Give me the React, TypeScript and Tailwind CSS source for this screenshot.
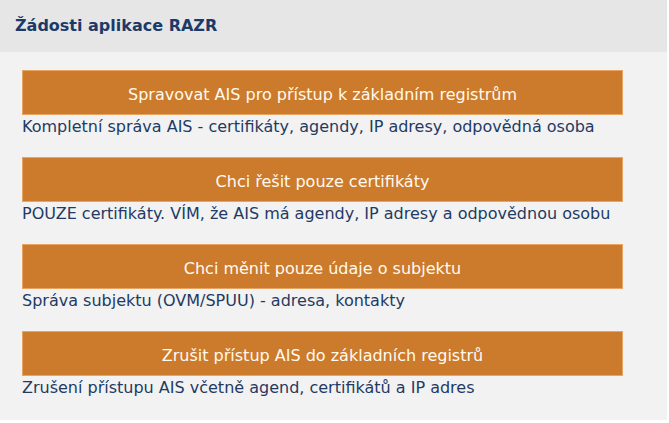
const items = [
  {
    title: "Spravovat AIS pro přístup k základním registrům",
    desc: "Kompletní správa AIS - certifikáty, agendy, IP adresy, odpovědná osoba",
  },
  {
    title: "Chci řešit pouze certifikáty",
    desc: "POUZE certifikáty. VÍM, že AIS má agendy, IP adresy a odpovědnou osobu",
  },
  {
    title: "Chci měnit pouze údaje o subjektu",
    desc: "Správa subjektu (OVM/SPUU) - adresa, kontakty",
  },
  {
    title: "Zrušit přístup AIS do základních registrů",
    desc: "Zrušení přístupu AIS včetně agend, certifikátů a IP adres",
  },
];

export default function App() {
  return (
    <div className="min-h-screen bg-white font-['DejaVu_Sans',sans-serif]">
      <div className="w-[667px] h-[420px] bg-[#f2f2f2]">
        <div className="h-[52px] bg-[#e6e6e6] pl-[15px] text-[16px] leading-[52px] font-bold text-[#1b3a68]">
          Žádosti aplikace RAZR
        </div>
        <div className="pl-[22px] pt-[18px]">
          {items.map((item) => (
            <div key={item.title} className="mb-[18px]">
              <button className="flex h-[45px] w-[601px] items-center justify-center border border-[#e7a564] bg-[#cc7a2b] pt-[4px] text-[16px] text-[#fffaf0]">
                {item.title}
              </button>
              <p className="text-[16px] leading-[24px] text-[#1f3a63]">{item.desc}</p>
            </div>
          ))}
        </div>
      </div>
    </div>
  );
}
